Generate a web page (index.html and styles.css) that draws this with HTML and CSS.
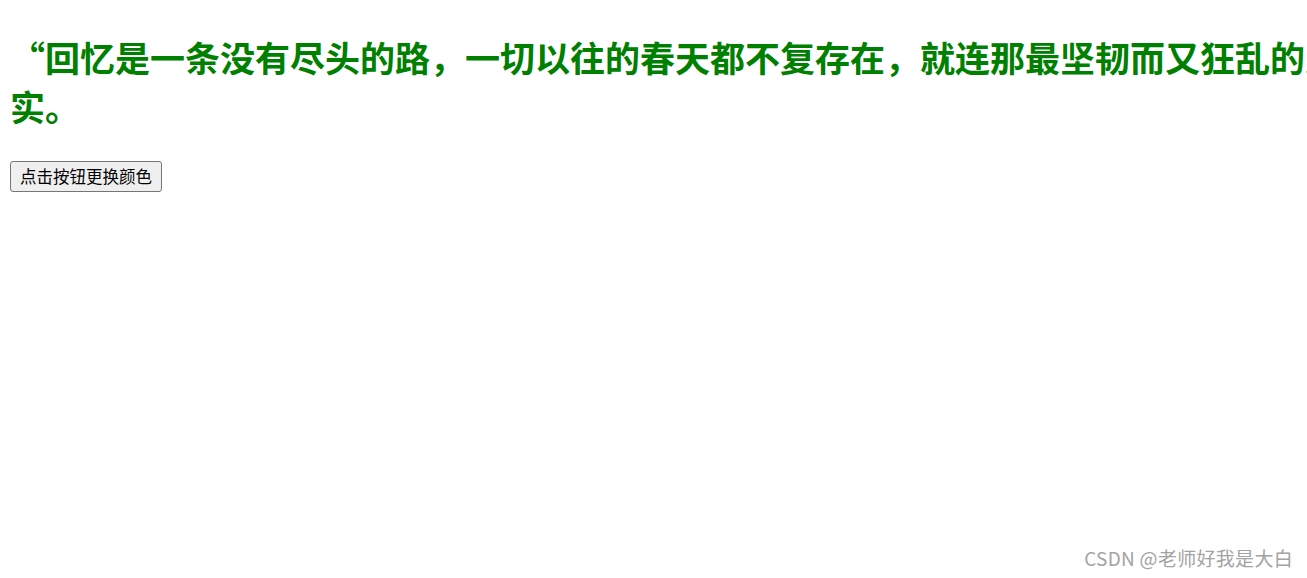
FILE: index.html
```html
<!DOCTYPE html>
<html lang="zh-CN">
<head>
<meta charset="utf-8">
<title>换颜色</title>
<link rel="stylesheet" href="styles.css">
</head>
<body>
<h1 class="quote" id="quote">“回忆是一条没有尽头的路，一切以往的春天都不复存在，就连那最坚韧而又狂乱的爱情归根结底也不过是一种转瞬即逝的现实。</h1>
<button class="btn" type="button" id="btn">点击按钮更换颜色</button>
<div class="mark">CSDN @老师好我是大白</div>
</body>
</html>
```

FILE: styles.css
```css
html {
  overflow: hidden;
}

body {
  margin: 0;
  padding: 0 10px;
  height: 578px;
  position: relative;
  background: #fff;
  font-family: "Noto Sans CJK SC", "Liberation Sans", sans-serif;
}

/* the quote is wider than the window; its first line runs past the right edge */
.quote {
  width: 1940px;
  margin: 32px 0 31px;
  font-size: 35px;
  line-height: 49px;
  font-weight: 700;
  color: #008000;
}

.btn {
  display: block;
  box-sizing: border-box;
  height: 31px;
  margin: 0;
  padding: 0 9px;
  font-family: "Noto Sans CJK SC", sans-serif;
  font-size: 16.5px;
  line-height: 27px;
  color: #000;
  background: #efefef;
  border: 1px solid #767676;
  border-radius: 3px;
}

.mark {
  position: absolute;
  right: 14px;
  bottom: 8px;
  font-family: "Noto Sans CJK SC", sans-serif;
  font-size: 19px;
  line-height: 24px;
  letter-spacing: 0.3px;
  color: #a3a3a3;
}
```
